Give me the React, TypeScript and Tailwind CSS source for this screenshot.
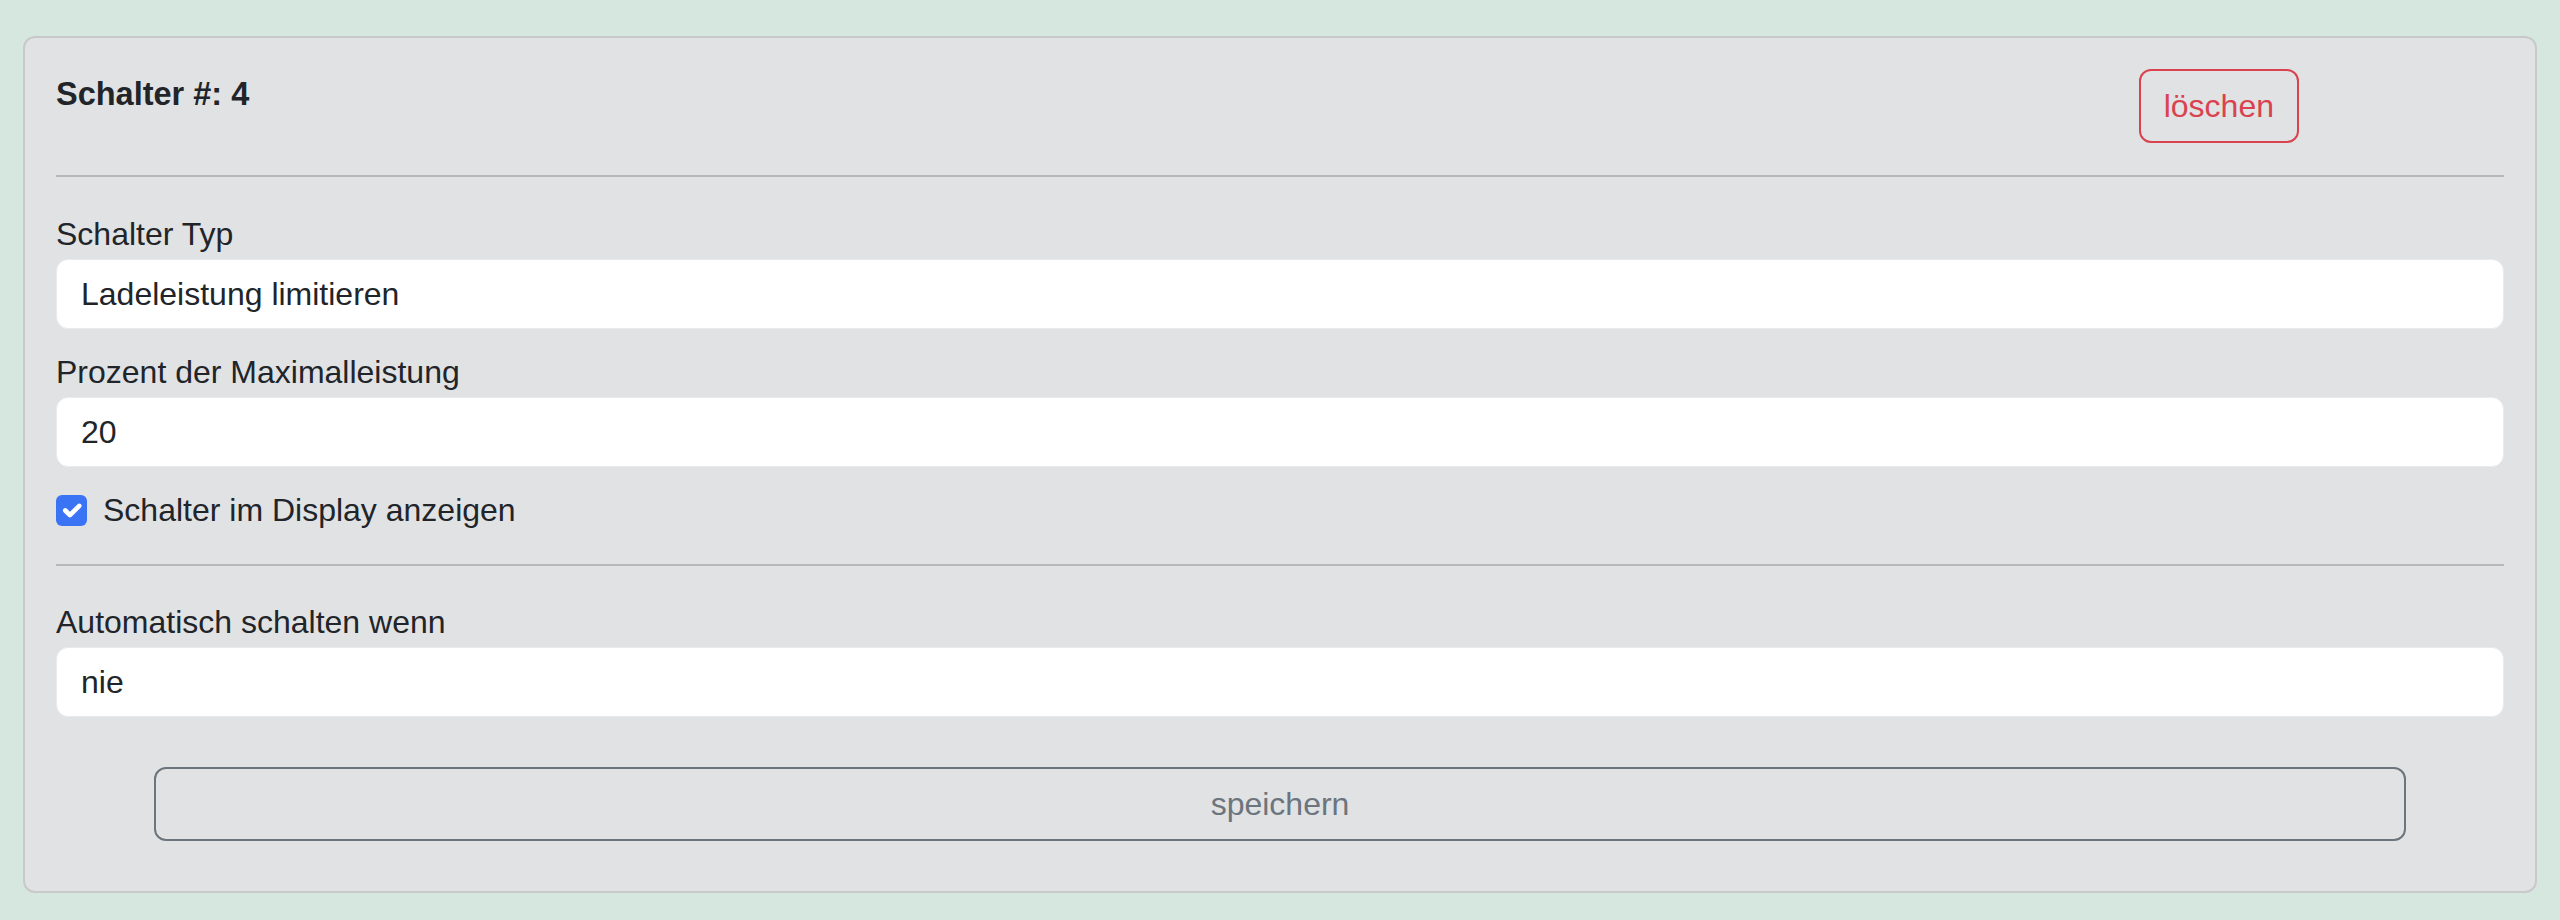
import { useState } from 'react'

// Simple labelled text field, styled like the form controls in the settings card
function Field({ label, value }: { label: string; value: string }) {
  return (
    <div>
      <div className="leading-[46px]">{label}</div>
      <div className="mt-[2px] h-[70px] flex items-center px-[24px] bg-white border border-[#e9eaec] rounded-[12px] leading-[46px]">
        {value}
      </div>
    </div>
  )
}

function CheckMark() {
  return (
    <svg viewBox="0 0 20 20" className="w-[31px] h-[31px]">
      <path d="m6 10 3 3 6-6" fill="none" stroke="#fff" strokeWidth="3" strokeLinecap="round" strokeLinejoin="round" />
    </svg>
  )
}

export default function App() {
  const [showInDisplay, setShowInDisplay] = useState(true)

  return (
    <div className="min-h-screen bg-[#d6e7df] px-[23px] pt-[36px] font-['Liberation_Sans',Arial,sans-serif] text-[32px] text-[#212529]">
      <div className="bg-[#e1e2e4] border-2 border-[#c8c9cb] rounded-[12px] pt-[33px] pb-[50px] px-[31px]">
        {/* Header */}
        <div className="flex items-start justify-between">
          <h2 className="font-bold text-[32.5px] leading-[46px]">Schalter #: 4</h2>
          <button className="-mt-[2px] mr-[205px] h-[74px] px-[23px] border-2 border-[#d9434f] text-[#d9434f] rounded-[12px] leading-[46px]">
            löschen
          </button>
        </div>

        <hr className="mt-[32px] border-0 h-[2px] bg-[#b7b8ba]" />

        <div className="mt-[34px]">
          <Field label="Schalter Typ" value="Ladeleistung limitieren" />
        </div>
        <div className="mt-[20px]">
          <Field label="Prozent der Maximalleistung" value="20" />
        </div>

        <label className="mt-[20px] flex items-center gap-[16px] leading-[46px] cursor-pointer">
          <span
            onClick={() => setShowInDisplay(!showInDisplay)}
            className={
              showInDisplay
                ? 'w-[31px] h-[31px] rounded-[6px] bg-[#3a74f5] flex items-center justify-center'
                : 'w-[31px] h-[31px] rounded-[6px] bg-white border border-[#c8c9cb]'
            }
          >
            {showInDisplay && <CheckMark />}
          </span>
          Schalter im Display anzeigen
        </label>

        <hr className="mt-[31px] border-0 h-[2px] bg-[#b7b8ba]" />

        <div className="mt-[33px]">
          <Field label="Automatisch schalten wenn" value="nie" />
        </div>

        <div className="mt-[50px] px-[98px]">
          <button className="w-full h-[74px] border-2 border-[#6c757d] rounded-[12px] text-[#6c757d] leading-[46px]">
            speichern
          </button>
        </div>
      </div>
    </div>
  )
}
